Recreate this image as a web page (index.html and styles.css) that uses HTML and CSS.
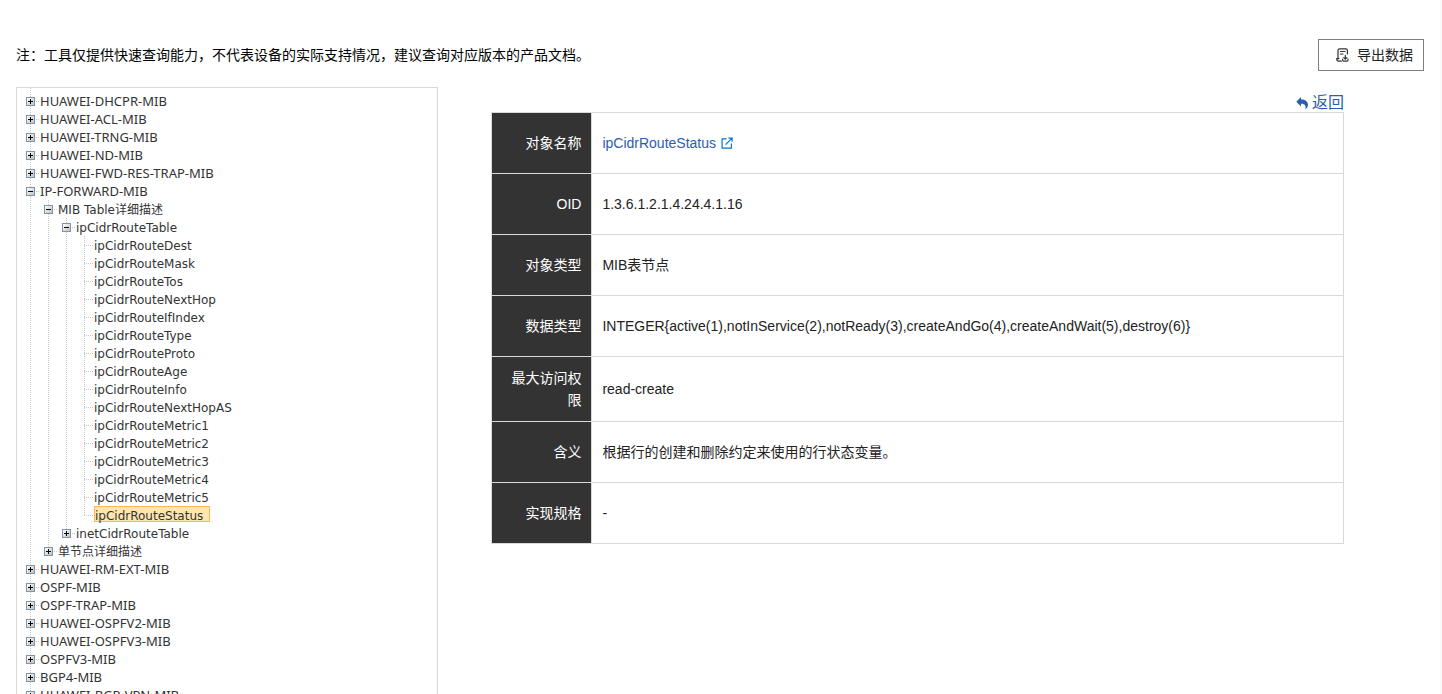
FILE: index.html
```html
<!DOCTYPE html>
<html lang="zh-CN">
<head>
<meta charset="utf-8">
<title>MIB 查询</title>
<link rel="stylesheet" href="styles.css">
</head>
<body>
<div class="page">
  <header class="topbar">
    <p class="note">注：工具仅提供快速查询能力，不代表设备的实际支持情况，建议查询对应版本的产品文档。</p>
    <button class="export" type="button">
      <svg viewBox="0 0 14 14" width="14" height="14" fill="none" stroke="#333" stroke-width="1.2" stroke-linecap="round">
        <path d="M6.3 13.2H3.8C2.4 13.2 1.8 12.4 1.8 11.2V10.6H4M3 10.4V2.4C3 1.3 3.5.8 4.6.8H10.8C11.9.8 12.4 1.3 12.4 2.4V6"/>
        <path d="M5.4 3.5H10M5.4 6H8M10.3 7.4V10.8M8.7 9.6L10.3 11.1L11.9 9.6M7.6 11.2V12C7.6 12.8 8 13.2 8.7 13.2H12C12.7 13.2 13 12.8 13 12V11.2"/>
      </svg>
      导出数据
    </button>
  </header>
  <main class="main">
    <nav class="panel">
      <ul class="tree">
        <li><button class="toggle" type="button" aria-label="展开"></button><a href="#">HUAWEI-DHCPR-MIB</a></li>
        <li><button class="toggle" type="button" aria-label="展开"></button><a href="#">HUAWEI-ACL-MIB</a></li>
        <li><button class="toggle" type="button" aria-label="展开"></button><a href="#">HUAWEI-TRNG-MIB</a></li>
        <li><button class="toggle" type="button" aria-label="展开"></button><a href="#">HUAWEI-ND-MIB</a></li>
        <li><button class="toggle" type="button" aria-label="展开"></button><a href="#">HUAWEI-FWD-RES-TRAP-MIB</a></li>
        <li><button class="toggle open" type="button" aria-label="收起"></button><a href="#">IP-FORWARD-MIB</a>
          <ul>
            <li><button class="toggle open" type="button" aria-label="收起"></button><a href="#">MIB Table详细描述</a>
              <ul>
                <li><button class="toggle open" type="button" aria-label="收起"></button><a href="#">ipCidrRouteTable</a>
                  <ul>
                    <li class="leaf"><a href="#">ipCidrRouteDest</a></li>
                    <li class="leaf"><a href="#">ipCidrRouteMask</a></li>
                    <li class="leaf"><a href="#">ipCidrRouteTos</a></li>
                    <li class="leaf"><a href="#">ipCidrRouteNextHop</a></li>
                    <li class="leaf"><a href="#">ipCidrRouteIfIndex</a></li>
                    <li class="leaf"><a href="#">ipCidrRouteType</a></li>
                    <li class="leaf"><a href="#">ipCidrRouteProto</a></li>
                    <li class="leaf"><a href="#">ipCidrRouteAge</a></li>
                    <li class="leaf"><a href="#">ipCidrRouteInfo</a></li>
                    <li class="leaf"><a href="#">ipCidrRouteNextHopAS</a></li>
                    <li class="leaf"><a href="#">ipCidrRouteMetric1</a></li>
                    <li class="leaf"><a href="#">ipCidrRouteMetric2</a></li>
                    <li class="leaf"><a href="#">ipCidrRouteMetric3</a></li>
                    <li class="leaf"><a href="#">ipCidrRouteMetric4</a></li>
                    <li class="leaf"><a href="#">ipCidrRouteMetric5</a></li>
                    <li class="leaf"><a class="selected" href="#">ipCidrRouteStatus</a></li>
                  </ul>
                </li>
                <li><button class="toggle" type="button" aria-label="展开"></button><a href="#">inetCidrRouteTable</a></li>
              </ul>
            </li>
            <li><button class="toggle" type="button" aria-label="展开"></button><a href="#">单节点详细描述</a></li>
          </ul>
        </li>
        <li><button class="toggle" type="button" aria-label="展开"></button><a href="#">HUAWEI-RM-EXT-MIB</a></li>
        <li><button class="toggle" type="button" aria-label="展开"></button><a href="#">OSPF-MIB</a></li>
        <li><button class="toggle" type="button" aria-label="展开"></button><a href="#">OSPF-TRAP-MIB</a></li>
        <li><button class="toggle" type="button" aria-label="展开"></button><a href="#">HUAWEI-OSPFV2-MIB</a></li>
        <li><button class="toggle" type="button" aria-label="展开"></button><a href="#">HUAWEI-OSPFV3-MIB</a></li>
        <li><button class="toggle" type="button" aria-label="展开"></button><a href="#">OSPFV3-MIB</a></li>
        <li><button class="toggle" type="button" aria-label="展开"></button><a href="#">BGP4-MIB</a></li>
        <li><button class="toggle" type="button" aria-label="展开"></button><a href="#">HUAWEI-BGP-VPN-MIB</a></li>
      </ul>
    </nav>
    <section class="detail">
      <a class="back" href="#">
        <svg viewBox="0 0 12 12" width="12" height="12" fill="#2a5db0"><path d="M5 0V2.6C9.3 2.6 12 4.6 12 7.9C12 9.8 10.8 11.3 9.3 12C10.2 9.3 9.6 6.7 5 6.7V9.4L.3 4.7Z"/></svg>返回</a>
      <table class="info">
        <tbody>
          <tr><th scope="row">对象名称</th><td><a class="name" href="#">ipCidrRouteStatus<svg viewBox="0 0 12 12" width="12" height="12" fill="none" stroke="#0077c8" stroke-width="1.2"><path d="M5.5 1.8H1.1V11.2H10.4V6.5M4.6 7.6L10.6 1.6M7.4 1.1H11.1V4.8"/></svg></a></td></tr>
          <tr><th scope="row">OID</th><td>1.3.6.1.2.1.4.24.4.1.16</td></tr>
          <tr><th scope="row">对象类型</th><td>MIB表节点</td></tr>
          <tr><th scope="row">数据类型</th><td>INTEGER{active(1),notInService(2),notReady(3),createAndGo(4),createAndWait(5),destroy(6)}</td></tr>
          <tr><th scope="row">最大访问权限</th><td>read-create</td></tr>
          <tr><th scope="row">含义</th><td>根据行的创建和删除约定来使用的行状态变量。</td></tr>
          <tr><th scope="row">实现规格</th><td>-</td></tr>
        </tbody>
      </table>
    </section>
  </main>
</div>
</body>
</html>
```
FILE: styles.css
```css
* { box-sizing: border-box; }
body {
  margin: 0;
  background: #fff;
  color: #222;
  font: 14px/22px "Liberation Sans", "Noto Sans CJK SC", sans-serif;
}
a { text-decoration: none; }
.page {
  height: 100vh;
  overflow: hidden;
  padding: 39px 16px 0;
  border-right: 2px solid #fafafa;
}
.topbar {
  display: flex;
  justify-content: space-between;
  align-items: center;
  height: 32px;
}
.note { margin: 0; color: #000; }
.export {
  display: flex;
  align-items: center;
  gap: 8px;
  height: 32px;
  padding: 0 10px 0 16px;
  border: 1px solid #808080;
  background: #fff;
  color: #222;
  font: inherit;
}
.main {
  display: flex;
  align-items: flex-start;
  margin-top: 16px;
}
.panel {
  flex: none;
  width: 30%;
  padding: 0 5px;
  border: 1px solid #d9d9d9;
}
.tree, .tree ul { margin: 0; padding: 0; list-style: none; }
.tree { font: 12px/18px "DejaVu Sans", "Noto Sans CJK SC", sans-serif; }
.tree > li:first-child { padding-top: 4px; }
.tree ul { padding-left: 18px; }

/* dotted guide running through each level */
.tree li {
  background: repeating-linear-gradient(#c8c8c8 0 1px, transparent 1px 2px) 8px 0 / 1px 100% no-repeat;
}
.tree ul > li:last-child { background-size: 1px 9px; }
.tree li > a {
  display: inline-block;
  height: 18px;
  color: #333;
  line-height: 20px;
  vertical-align: top;
  white-space: nowrap;
}
.tree > li > a {
  font-family: "Noto Sans", sans-serif;
  font-size: 13px;
  line-height: 18px;
}
.toggle, .leaf::before {
  display: inline-block;
  width: 18px;
  height: 18px;
  padding: 0;
  border: 0;
  vertical-align: top;
}
.leaf::before {
  content: "";
  background: repeating-linear-gradient(90deg, #c8c8c8 0 1px, transparent 1px 2px) 8px 9px / 9px 1px no-repeat;
}
.toggle {
  background:
    linear-gradient(#000, #000) 6px 9px / 5px 1px no-repeat,
    linear-gradient(#000, #000) 8px 7px / 1px 5px no-repeat,
    linear-gradient(135deg, #fff, #c5bfb5) 5px 6px / 7px 7px no-repeat,
    linear-gradient(#7b95b4, #7b95b4) 4px 5px / 9px 9px no-repeat,
    repeating-linear-gradient(90deg, #c8c8c8 0 1px, transparent 1px 2px) 14px 9px / 3px 1px no-repeat;
}
.toggle.open {
  background:
    linear-gradient(#000, #000) 6px 9px / 5px 1px no-repeat,
    linear-gradient(135deg, #fff, #c5bfb5) 5px 6px / 7px 7px no-repeat,
    linear-gradient(#7b95b4, #7b95b4) 4px 5px / 9px 9px no-repeat,
    repeating-linear-gradient(90deg, #c8c8c8 0 1px, transparent 1px 2px) 14px 9px / 3px 1px no-repeat;
}
.tree li > a.selected {
  height: 16px;
  margin-bottom: 2px;
  padding-right: 6px;
  border: 1px solid #ffb951;
  background: #ffe6b0;
  line-height: 18px;
}
.detail {
  flex: 1;
  display: flex;
  flex-direction: column;
  padding: 7px 80px 0 53px;
}
.back {
  display: flex;
  align-self: flex-end;
  align-items: center;
  gap: 4px;
  color: #2a5db0;
  font-size: 16px;
  line-height: 18px;
}
.back svg { height: 14px; }
.info {
  width: 100%;
  border-collapse: collapse;
  table-layout: fixed;
}
.info th, .info td {
  height: 61px;
  padding: 10px;
  border: 1px solid #d9d9d9;
  text-align: left;
}
.info th {
  width: 100px;
  background: #333;
  color: #fff;
  font-weight: 400;
  text-align: right;
}
.name {
  display: inline-flex;
  align-items: center;
  gap: 5px;
  color: #2a5db0;
}
```
